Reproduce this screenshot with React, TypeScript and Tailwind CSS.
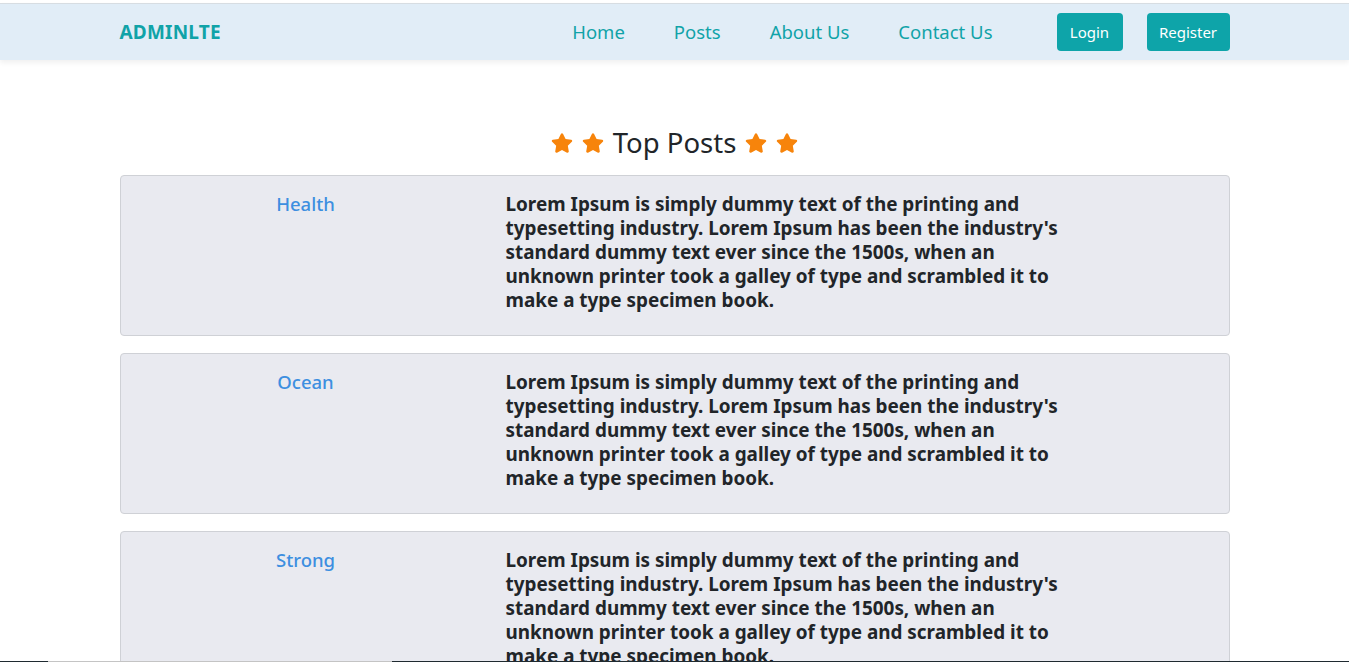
import React from "react";
import { FaStar } from "react-icons/fa";

const LOREM =
  "Lorem Ipsum is simply dummy text of the printing and typesetting industry. Lorem Ipsum has been the industry's standard dummy text ever since the 1500s, when an unknown printer took a galley of type and scrambled it to make a type specimen book.";

const posts = ["Health", "Ocean", "Strong"];

export default function App() {
  return (
    <div className="h-screen overflow-hidden bg-white pt-[3px] font-['Noto_Sans','Open_Sans',sans-serif] text-[#212529]">
      <nav className="relative z-10 border-t border-[#d7dde2] bg-[#e1edf7] shadow-[0_3px_5px_rgba(0,0,0,0.06)]">
        <div className="mx-auto flex h-[56px] w-[1110px] items-center">
          <a className="text-[19px] font-bold tracking-[0.2px] text-[#10a3a8]">ADMINLTE</a>
          <ul className="ml-auto mr-[64px] flex items-center gap-[49px] text-[18.5px] text-[#10a3a8]">
            <li>Home</li>
            <li>Posts</li>
            <li>About Us</li>
            <li>Contact Us</li>
          </ul>
          <div className="flex items-center gap-[24px]">
            <button className="h-[38px] w-[66px] rounded-[4px] bg-[#0ea4a9] text-[15px] text-white">Login</button>
            <button className="h-[38px] w-[83px] rounded-[4px] bg-[#0ea4a9] text-[15px] text-white">Register</button>
          </div>
        </div>
      </nav>

      <main className="mx-auto w-[1110px]">
        <h2 className="mt-[65px] mb-[14px] flex items-center justify-center gap-[9px] text-[27.5px] leading-[36px]">
          <span className="flex items-center gap-[9px] text-[#f7840b]">
            <FaStar className="h-[22px] w-[22px]" />
            <FaStar className="h-[22px] w-[22px]" />
          </span>
          <span>Top Posts</span>
          <span className="flex items-center gap-[9px] text-[#f7840b]">
            <FaStar className="h-[22px] w-[22px]" />
            <FaStar className="h-[22px] w-[22px]" />
          </span>
        </h2>

        <div className="flex flex-col gap-[17px]">
          {posts.map((p) => (
            <div
              key={p}
              className="flex h-[161px] shrink-0 rounded-[4px] border border-[#cfd1d6] bg-[#e9eaf0] pt-[16px]"
            >
              <div className="w-[370px] text-center text-[18.5px] font-medium leading-[24px] text-[#3d8fe0]">{p}</div>
              <p className="ml-[15px] w-[562px] text-[18.9px] font-bold leading-[24px]">{LOREM}</p>
            </div>
          ))}
        </div>
      </main>

      <div className="fixed bottom-0 left-0 right-0 flex h-px">
        <div className="w-[48px] bg-[#1f2a30]" />
        <div className="w-[344px] bg-[#c4c4c4]" />
        <div className="flex-1 bg-[#1f2a30]" />
      </div>
    </div>
  );
}
